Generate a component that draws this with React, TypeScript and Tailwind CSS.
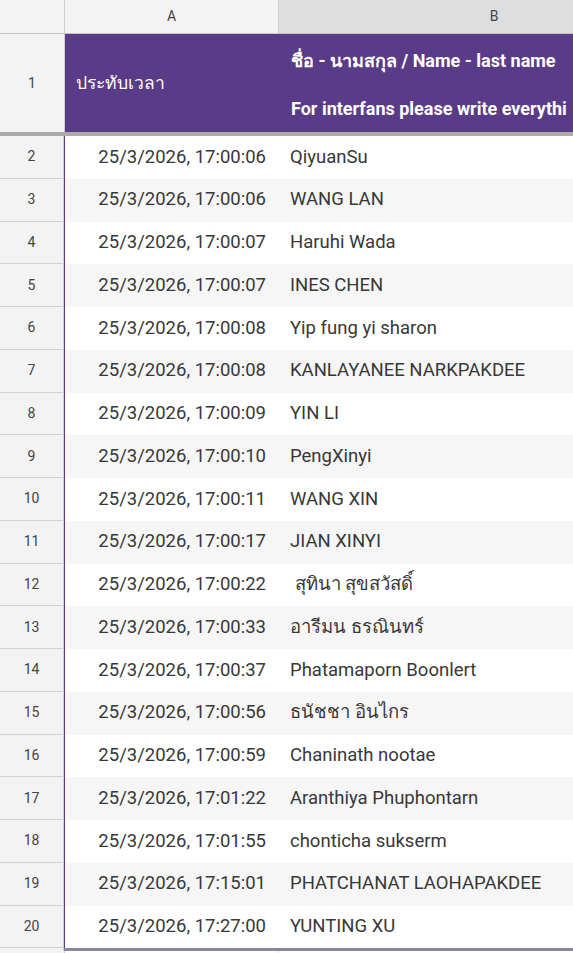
import React from 'react';

const rows: [string, string][] = [
  ['17:00:06', 'QiyuanSu'],
  ['17:00:06', 'WANG LAN'],
  ['17:00:07', 'Haruhi Wada'],
  ['17:00:07', 'INES CHEN'],
  ['17:00:08', 'Yip fung yi sharon'],
  ['17:00:08', 'KANLAYANEE NARKPAKDEE'],
  ['17:00:09', 'YIN LI'],
  ['17:00:10', 'PengXinyi'],
  ['17:00:11', 'WANG XIN'],
  ['17:00:17', 'JIAN XINYI'],
  ['17:00:22', '\u00a0สุทินา สุขสวัสดิ์'],
  ['17:00:33', 'อารีมน ธรณินทร์'],
  ['17:00:37', 'Phatamaporn Boonlert'],
  ['17:00:56', 'ธนัชชา อินไกร'],
  ['17:00:59', 'Chaninath nootae'],
  ['17:01:22', 'Aranthiya Phuphontarn'],
  ['17:01:55', 'chonticha sukserm'],
  ['17:15:01', 'PHATCHANAT LAOHAPAKDEE'],
  ['17:27:00', 'YUNTING XU'],
];

export default function App() {
  return (
    <div className="w-[573px] h-[953px] overflow-hidden bg-white text-[#222] font-['Roboto','Noto_Sans',sans-serif]">
      {/* column headers */}
      <div className="flex h-[34px] border-b border-[#c4c4c4] text-[14px] text-[#444]">
        <div className="w-[65px] shrink-0 bg-[#f3f3f3] border-r border-[#cfcfcf]" />
        <div className="w-[214px] shrink-0 bg-[#f3f3f3] border-r border-[#cfcfcf] flex items-center justify-center">A</div>
        <div className="w-[430px] shrink-0 bg-[#dedede] flex items-center justify-center">B</div>
      </div>

      {/* header row */}
      <div className="flex h-[98px]">
        <div className="w-[65px] shrink-0 bg-[#f3f3f3] border-r border-[#cfcfcf] flex items-center justify-center text-[14px] text-[#444]">1</div>
        <div className="w-[214px] shrink-0 bg-[#5a3b87] flex items-center px-[11px] text-[17.5px] text-white">ประทับเวลา</div>
        <div className="w-[294px] shrink-0 overflow-hidden bg-[#5a3b87] flex flex-col justify-center pl-[12px] pt-[4px] text-[18px] leading-[24px] font-bold text-white whitespace-nowrap">
          <span>ชื่อ - นามสกุล / Name - last name</span>
          <span>&nbsp;</span>
          <span>For interfans please write everythi</span>
        </div>
      </div>
      <div className="h-[4px] bg-[#ababab]" />

      {/* data rows */}
      <div className="flex flex-col">
        {rows.map(([time, name], i) => (
          <div key={i} className="flex h-[42.75px]">
            <div className="w-[64px] shrink-0 bg-[#f3f3f3] border-r border-b border-[#d0d0d0] flex items-center justify-center text-[14px] text-[#444]">
              {i + 2}
            </div>
            <div className={`flex flex-1 border-l border-[#5a3b87] ${i % 2 === 0 ? 'bg-white' : 'bg-[#f6f6f6]'}`}>
              <div className="w-[213px] shrink-0 flex items-center justify-end pr-[12px] text-[18.5px] text-[#383838]">
                25/3/2026, {time}
              </div>
              <div className="flex-1 flex items-center pl-[12px] text-[18.5px] text-[#383838] whitespace-nowrap">{name}</div>
            </div>
          </div>
        ))}
      </div>
      <div className="flex h-[3px]">
        <div className="w-[64px] shrink-0 bg-[#f3f3f3] border-r border-[#d0d0d0]" />
        <div className="flex-1 bg-[#8c8699]" />
      </div>
      <div className="flex h-[10px]">
        <div className="w-[65px] shrink-0 bg-[#f3f3f3] border-r border-[#d0d0d0]" />
        <div className="w-[214px] shrink-0 border-r border-[#e2e2e2]" />
      </div>
    </div>
  );
}
